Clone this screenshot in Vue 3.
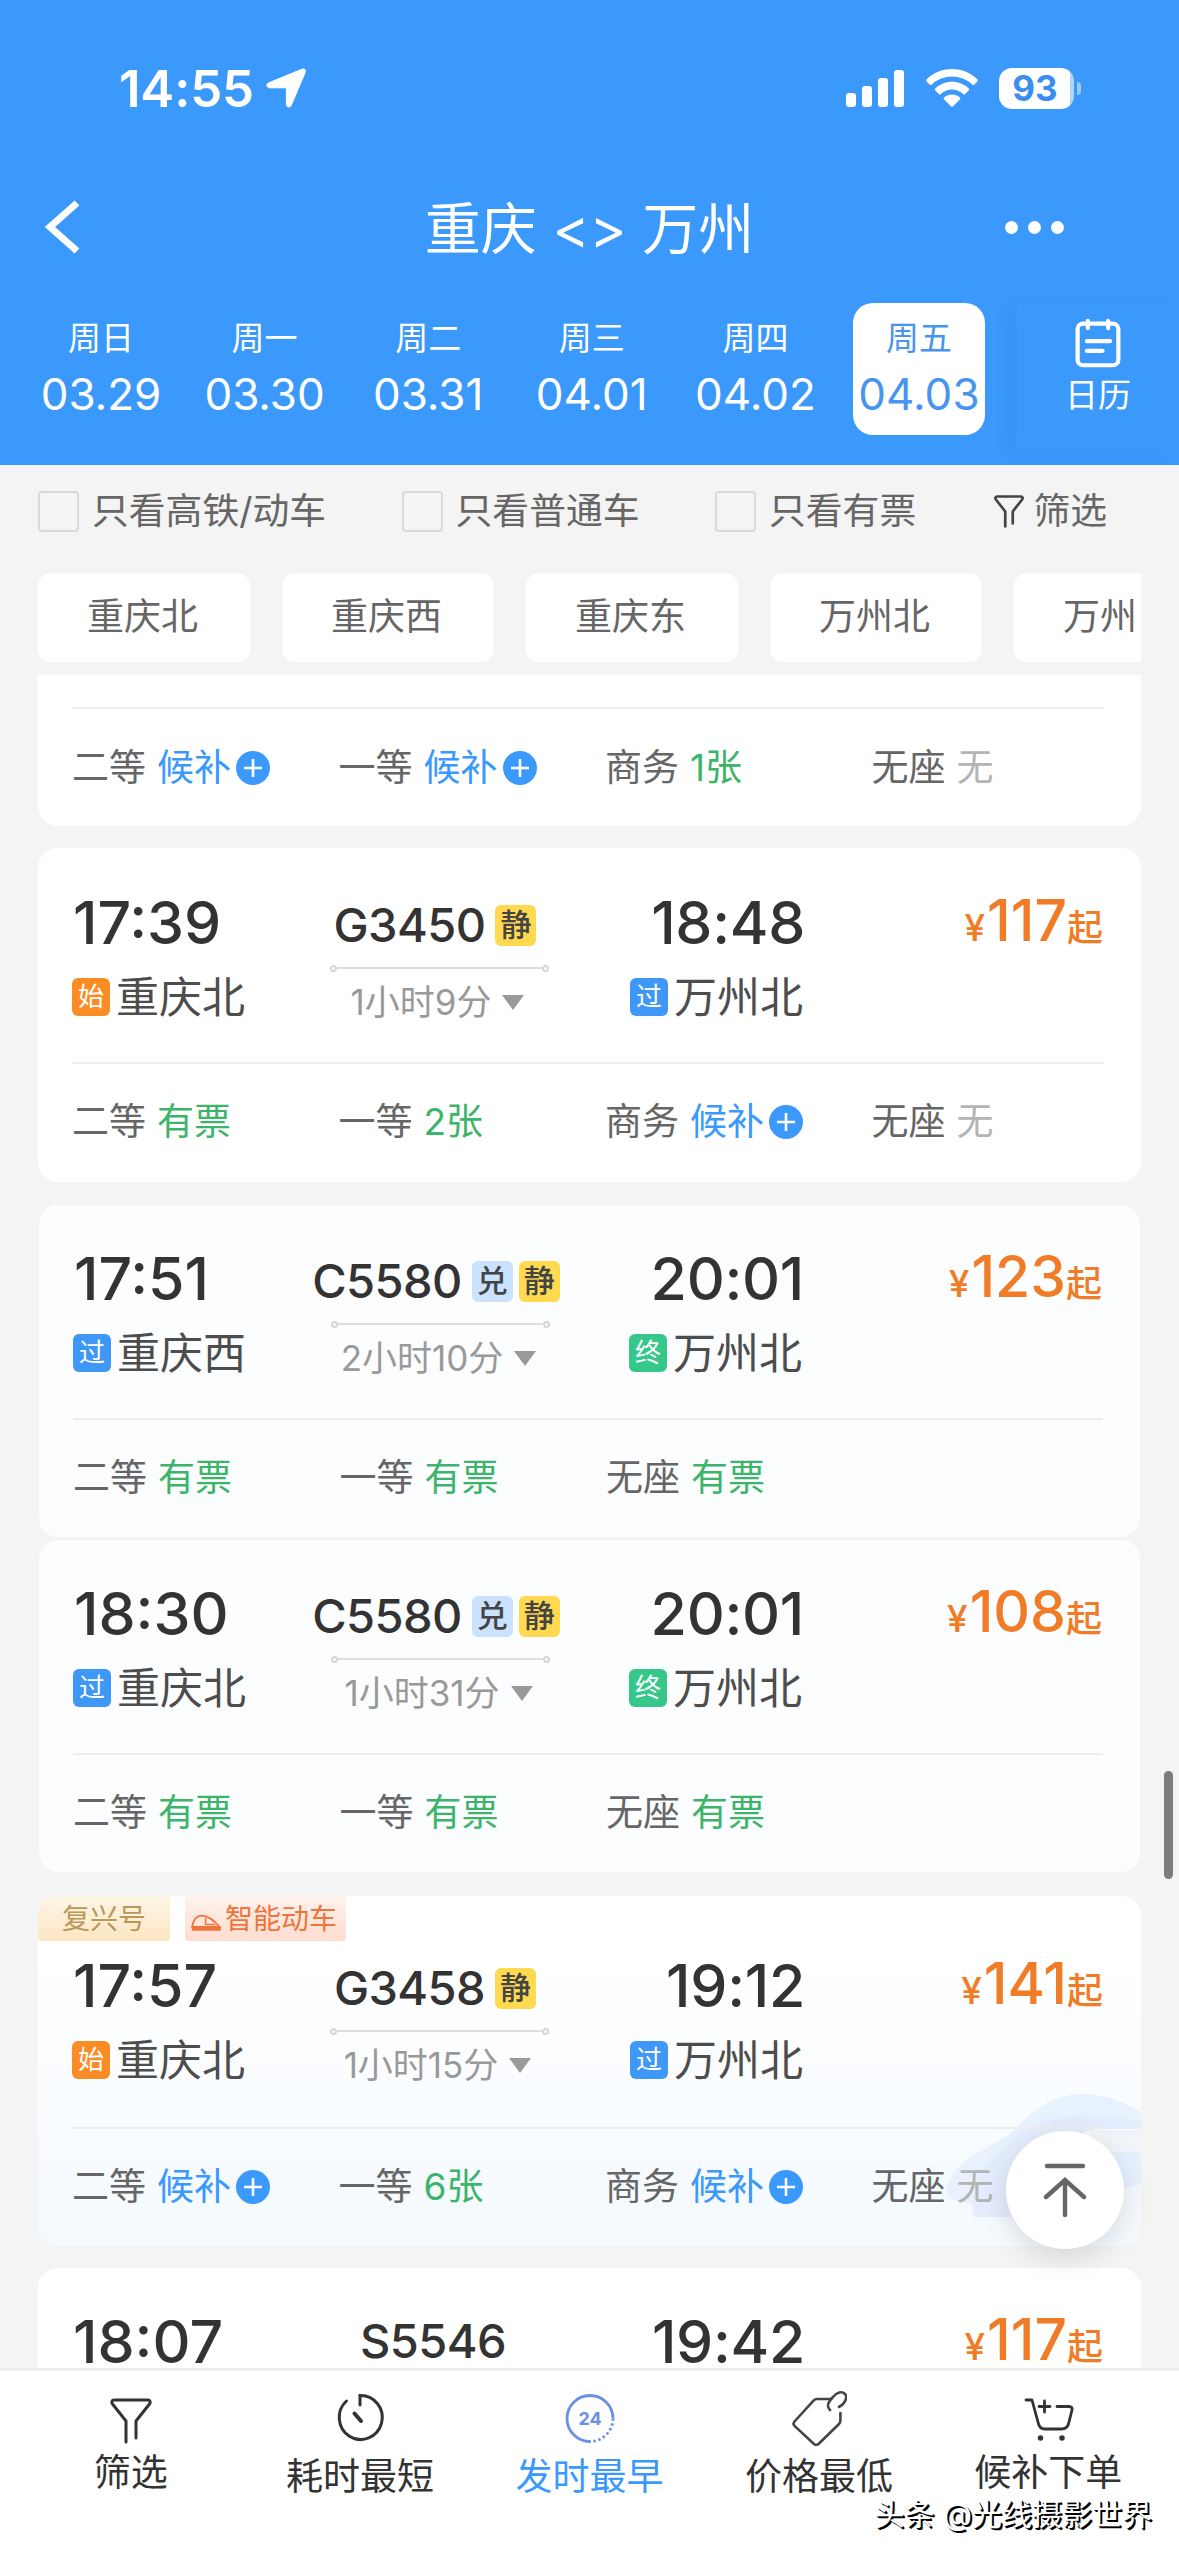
<template>
  <div class="page">
    <header class="header">
      <div class="status-bar">
        <div class="status-left">
          <span class="clock">14:55</span>
          <svg class="location" viewBox="0 0 40 40">
            <path d="M36 1.2c2.4-1 4.2.8 3.2 3.2L25.4 37c-1.2 3-5 2.5-5-.8V21c0-.8-.4-1.2-1.2-1.2H3.8c-3.4 0-4-3.8-1-5z" fill="#fff" stroke="#fff" stroke-width="1" />
          </svg>
        </div>
        <div class="status-right">
          <svg class="signal" viewBox="0 0 58 38">
            <rect x="0" y="24" width="10" height="14" rx="3" />
            <rect x="16" y="17" width="10" height="21" rx="3" />
            <rect x="32" y="9" width="10" height="29" rx="3" />
            <rect x="48" y="1" width="10" height="37" rx="3" />
          </svg>
          <svg class="wifi" viewBox="0 0 52 38">
            <path d="M26 0C36 0 45 4 51.3 10.2c.8.8.8 1.6.1 2.3l-3 3c-.7.7-1.5.7-2.2 0C40.6 10.4 33.6 7.6 26 7.6S11.4 10.4 5.8 15.5c-.7.7-1.5.7-2.2 0l-3-3c-.7-.7-.7-1.5.1-2.3C7 4 16 0 26 0z" />
            <path d="M26 12.8c6.4 0 12.2 2.5 16.5 6.5.8.8.8 1.6.1 2.3l-3.3 3.3c-.7.7-1.4.7-2.2 0-3-2.7-6.9-4.3-11.1-4.3s-8.1 1.6-11.1 4.3c-.8.7-1.5.7-2.2 0l-3.3-3.3c-.7-.7-.7-1.5.1-2.3 4.3-4 10.1-6.5 16.5-6.5z" />
            <path d="M26 25.4c3 0 5.7 1.1 7.7 2.9.9.8.9 1.5.2 2.2l-6.5 6.6c-.9.9-1.9.9-2.8 0l-6.5-6.6c-.7-.7-.7-1.4.2-2.2 2-1.8 4.7-2.9 7.7-2.9z" />
          </svg>
          <div class="battery">
            <span class="battery-body">93</span>
            <i class="battery-cap"></i>
          </div>
        </div>
      </div>

      <div class="nav-bar">
        <svg class="back" viewBox="0 0 36 54">
          <path d="M33 3 6 27l27 24" fill="none" stroke="#fff" stroke-width="7" />
        </svg>
        <h1 class="title">{{ from }} &lt;&gt; {{ to }}</h1>
        <div class="more"><i></i><i></i><i></i></div>
      </div>

      <div class="date-bar">
        <div class="dates">
          <div
            v-for="day in days"
            :key="day.date"
            :class="['date', { active: day.date === currentDate }]"
            @click="currentDate = day.date"
          >
            <span class="week">{{ day.week }}</span>
            <span class="day">{{ day.date }}</span>
          </div>
        </div>
        <div class="calendar">
          <svg class="calendar-icon" viewBox="0 0 50 54" fill="none" stroke="#fff" stroke-width="4.5" stroke-linecap="round">
            <rect x="3" y="6" width="44" height="45" rx="6" />
            <path d="M14 3v8M36 3v8M13 25h25M13 35.5h17" />
          </svg>
          <span class="week">日历</span>
        </div>
      </div>
    </header>

    <div class="filters">
      <label v-for="item in checks" :key="item" class="check">
        <i class="box"></i>{{ item }}
      </label>
      <div class="filter-more">
        <svg class="funnel-small" viewBox="0 0 40 44" fill="none" stroke="#444" stroke-width="3.6" stroke-linecap="round" stroke-linejoin="round">
          <path d="M15 42V22L2.5 6C1 4 2 2 4 2h32c2 0 3 2 1.5 4L25 22v16" />
        </svg>
        筛选
      </div>
    </div>

    <div class="stations">
      <div v-for="name in stations" :key="name" class="station-chip">{{ name }}</div>
    </div>

    <main class="list">
      <section
        v-for="(train, index) in trains"
        :key="index"
        :class="['card', train.style]"
      >
        <svg v-if="train.tags" class="swirl" viewBox="0 0 200 156">
          <path d="M8 92c8-20 30-30 62-48C92 18 116 4 140 4c24 0 44 8 60 18v17h-46c-40 8-58 44-70 88H34c-6-2 2-12-8-14-20-4-24-8-18-21z" fill="#e8f1fe" />
          <path d="M40 82c36-50 88-68 160-50v7h-46c-40 8-58 44-70 88H34c-4-16-2-30 6-45z" fill="#dfeafc" opacity="0.5" />
          <path d="M150 40h50v22h-50z" fill="#f1f4f8" />
          <path d="M140 62h60v32c-20 6-40 6-60 4z" fill="#e6f0fe" />
        </svg>
        <div v-if="train.tags" class="tags">
          <span class="tag tag-gold">复兴号</span>
          <span class="tag tag-orange">
            <svg class="train-icon" viewBox="0 0 32 18">
              <path d="M1 13C2.5 6 6 1.5 11 1.5c7 0 13 5 19 12H1z" fill="none" stroke="#f0743a" stroke-width="1.8" />
              <path d="M15 3.5v7h10" fill="none" stroke="#f0743a" stroke-width="1.6" />
              <path d="M1 12h28l2.5 5H1z" fill="#f0743a" />
            </svg>
            智能动车
          </span>
        </div>

        <div v-if="train.no" class="trip">
          <div class="depart">
            <div class="time">{{ train.start }}</div>
            <div v-if="train.from" class="place">
              <span :class="['mark', markClass[train.fromMark]]">{{ train.fromMark }}</span>{{ train.from }}
            </div>
          </div>
          <div class="middle">
            <div :class="['number', { plain: !train.badges.length }]">
              {{ train.no }}
              <span v-for="b in train.badges" :key="b" :class="['badge', b === '兑' ? 'badge-blue' : 'badge-yellow']">{{ b }}</span>
            </div>
            <template v-if="train.duration">
              <div class="track"><i></i><i></i></div>
              <div class="duration">{{ train.duration }}<i class="caret"></i></div>
            </template>
          </div>
          <div class="arrive">
            <div class="time">{{ train.end }}</div>
            <div v-if="train.to" class="place">
              <span :class="['mark', markClass[train.toMark]]">{{ train.toMark }}</span>{{ train.to }}
            </div>
          </div>
          <div class="price"><small class="yen">¥</small>{{ train.price }}<small>起</small></div>
        </div>

        <div v-if="train.seats" class="seats">
          <div v-for="seat in train.seats" :key="seat[0]" class="seat">
            <span class="seat-name">{{ seat[0] }}</span>
            <span :class="seatClass(seat[1])">{{ seat[1] }}</span>
            <svg v-if="seat[1] === '候补'" class="plus" viewBox="0 0 34 34">
              <circle cx="17" cy="17" r="17" fill="#3b99fc" />
              <path d="M8 17h18M17 8v18" stroke="#fff" stroke-width="2.6" />
            </svg>
          </div>
        </div>
      </section>
    </main>

    <nav class="tab-bar">
      <div class="tab tab-up">
        <svg class="tab-icon" viewBox="0 0 56 56" fill="none" stroke="#333" stroke-width="3" stroke-linecap="round" stroke-linejoin="round">
          <path d="M23 52V31L9.5 14C8 12 9 10 11 10h34c2 0 3 2 1.5 4L33 31v17" />
        </svg>
        <span>筛选</span>
      </div>
      <div class="tab">
        <svg class="tab-icon" viewBox="0 0 56 56" fill="none" stroke="#333" stroke-width="3" stroke-linecap="round">
          <path d="M28 15V5.5A21.5 22 0 1 1 14.5 11" />
          <path d="M22.5 23.5 29 31" stroke-width="4" />
        </svg>
        <span>耗时最短</span>
      </div>
      <div class="tab active">
        <svg class="tab-icon" viewBox="0 0 56 56" fill="none" stroke="#6b8fe6" stroke-width="2.8">
          <path d="M28 51.5a23 23 0 1 1 23-23" />
          <path d="M51 28.5a23 23 0 0 1-23 23" stroke-dasharray="2.4 2.6" />
          <text x="28" y="35" text-anchor="middle" class="day-text">24</text>
        </svg>
        <span>发时最早</span>
      </div>
      <div class="tab">
        <svg class="tab-icon" viewBox="0 0 56 56" fill="none" stroke="#444" stroke-width="2.6" stroke-linecap="round" stroke-linejoin="round">
          <path d="M40 9H26c-1.5 0-2.5.5-3.5 1.6L3.5 31.5c-1.3 1.5-1.3 2.9 0 4.4L23 54c1.5 1.3 3 1.3 4.5 0L48 34c1-1 1.4-2 1.4-3.2V23" />
          <path d="M39 20c-4-4-2-8 3-13 4-5 9-6 12-3s0 10-6 13" />
        </svg>
        <span>价格最低</span>
      </div>
      <div class="tab tab-up">
        <svg class="tab-icon" viewBox="0 0 56 56" fill="none" stroke="#333" stroke-width="2.8" stroke-linecap="round" stroke-linejoin="round">
          <path d="M6 10h6l6.5 24c1 3 2.5 5 6 5h17c4 0 6-2 7-5L52 20c.6-2-.5-3.500-3-3.500H37" />
          <path d="M19 16.500h11M24.500 11v11" />
          <circle cx="20.5" cy="48" r="2" fill="#333" stroke-width="1.5" />
          <circle cx="42" cy="48" r="2" fill="#333" stroke-width="1.5" />
        </svg>
        <span>候补下单</span>
      </div>
    </nav>

    <div class="to-top">
      <svg viewBox="0 0 44 54" fill="none" stroke="#666" stroke-width="4.4" stroke-linecap="round">
        <path d="M4 3h36M22 17v35M3 34l19-17 19 17" />
      </svg>
    </div>
    <div class="scrollbar"></div>
    <div class="watermark">头条 @光线摄影世界</div>
  </div>
</template>

<script setup>
import { ref } from 'vue';

const from = '重庆';
const to = '万州';
const currentDate = ref('04.03');

const days = [
  { week: '周日', date: '03.29' },
  { week: '周一', date: '03.30' },
  { week: '周二', date: '03.31' },
  { week: '周三', date: '04.01' },
  { week: '周四', date: '04.02' },
  { week: '周五', date: '04.03' }
];

const checks = ['只看高铁/动车', '只看普通车', '只看有票'];
const stations = ['重庆北', '重庆西', '重庆东', '万州北', '万州'];

const markClass = { 始: 'mark-start', 过: 'mark-pass', 终: 'mark-end' };

const trains = [
  {
    style: 'card-cut',
    seats: [['二等', '候补'], ['一等', '候补'], ['商务', '1张'], ['无座', '无']]
  },
  {
    no: 'G3450', badges: ['静'], start: '17:39', end: '18:48',
    fromMark: '始', from: '重庆北', toMark: '过', to: '万州北',
    duration: '1小时9分', price: 117,
    seats: [['二等', '有票'], ['一等', '2张'], ['商务', '候补'], ['无座', '无']]
  },
  {
    style: 'card-transfer card-joined',
    no: 'C5580', badges: ['兑', '静'], start: '17:51', end: '20:01',
    fromMark: '过', from: '重庆西', toMark: '终', to: '万州北',
    duration: '2小时10分', price: 123,
    seats: [['二等', '有票'], ['一等', '有票'], ['无座', '有票']]
  },
  {
    style: 'card-transfer',
    no: 'C5580', badges: ['兑', '静'], start: '18:30', end: '20:01',
    fromMark: '过', from: '重庆北', toMark: '终', to: '万州北',
    duration: '1小时31分', price: 108,
    seats: [['二等', '有票'], ['一等', '有票'], ['无座', '有票']]
  },
  {
    style: 'card-smart', tags: true,
    no: 'G3458', badges: ['静'], start: '17:57', end: '19:12',
    fromMark: '始', from: '重庆北', toMark: '过', to: '万州北',
    duration: '1小时15分', price: 141,
    seats: [['二等', '候补'], ['一等', '6张'], ['商务', '候补'], ['无座', '无']]
  },
  {
    style: 'card-last',
    no: 'S5546', badges: [], start: '18:07', end: '19:42', price: 117
  }
];

const seatClass = (text) => {
  if (text === '候补') return 'wait';
  return text === '无' ? 'none' : 'have';
};
</script>

<style>
body {
  background: #f4f4f4;
}
</style>

<style scoped>
.page {
  position: relative;
  display: flex;
  flex-direction: column;
  width: 1179px;
  height: 2556px;
  overflow: hidden;
  background: #f4f4f4;
  font-family: Inter, "Noto Sans CJK SC", sans-serif;
  color: #333;
  white-space: nowrap;
}

.page * {
  box-sizing: border-box;
}

.header {
  height: 465px;
  flex: none;
  background: #3b99fc;
  color: #fff;
}

.status-bar {
  display: flex;
  justify-content: space-between;
  align-items: center;
  height: 176px;
  padding: 0 98px 0 119px;
}

.status-left,
.status-right {
  display: flex;
  align-items: center;
}

.clock {
  width: 147px;
  font-size: 51px;
  font-weight: 600;
  letter-spacing: -0.2px;
}

.location {
  width: 40px;
  height: 40px;
}

.signal {
  width: 58px;
  height: 38px;
  margin-right: 22px;
  fill: #fff;
}

.wifi {
  width: 52px;
  height: 38px;
  margin-right: 21px;
  fill: #fff;
}

.battery {
  display: flex;
  align-items: center;
  gap: 3px;
}

.battery-body {
  width: 75px;
  height: 41px;
  padding-right: 3px;
  border-radius: 13px;
  background: linear-gradient(90deg, #fff 71px, #b0d6fe 71px);
  color: #3b8ef0;
  font-size: 35px;
  font-weight: 700;
  line-height: 41px;
  text-align: center;
}

.battery-cap {
  width: 4px;
  height: 13px;
  border-radius: 0 4px 4px 0;
  background: #9bcafd;
}

.nav-bar {
  display: flex;
  align-items: center;
  height: 102px;
  padding: 0 115px 0 43px;
}

.back {
  width: 38px;
  height: 54px;
}

.title {
  flex: 1;
  margin: 0;
  padding: 3px 0 0 93px;
  font-size: 56px;
  font-weight: 400;
  line-height: 102px;
  text-align: center;
}

.more {
  display: flex;
  gap: 10px;
}

.more i {
  width: 13px;
  height: 13px;
  border-radius: 50%;
  background: #fff;
}

.date-bar {
  display: flex;
  justify-content: space-between;
  padding-top: 25px;
}

.dates {
  display: flex;
  gap: 31.6px;
  padding-left: 35px;
}

.date {
  display: flex;
  flex-direction: column;
  align-items: center;
  width: 132px;
  height: 132px;
  padding-top: 13px;
  border-radius: 20px;
}

.date.active {
  background: #fff;
  color: #4795ee;
}

.week {
  font-size: 33px;
  line-height: 44px;
}

.day {
  margin-top: 7px;
  font-size: 44px;
  line-height: 54px;
}

.calendar {
  display: flex;
  flex-direction: column;
  align-items: center;
  width: 162px;
  height: 150px;
  padding-top: 15px;
  box-shadow: -10px 0 16px -4px rgba(10, 90, 190, 0.09);
}

.calendar-icon {
  width: 50px;
  height: 50px;
  margin-bottom: 5px;
}

.filters {
  display: flex;
  align-items: center;
  height: 108px;
  flex: none;
  padding: 0 72px 16px 38px;
  color: #666;
  font-size: 36.8px;
  line-height: 44px;
}

.check {
  display: flex;
  align-items: center;
  margin-right: 75.5px;
}

.box {
  width: 41px;
  height: 41px;
  margin-right: 13px;
  border: 2px solid #d9d9d9;
  border-radius: 4px;
}

.filter-more {
  display: flex;
  align-items: center;
  gap: 9px;
  margin-left: auto;
}

.funnel-small {
  width: 30px;
  height: 33px;
}

.stations {
  display: flex;
  gap: 32px;
  flex: none;
  margin: 0 38px 13px;
  overflow: hidden;
}

.station-chip {
  width: 212px;
  height: 89px;
  flex: none;
  padding-left: 49px;
  border-radius: 13px;
  background: #fff;
  color: #666;
  font-size: 37px;
  line-height: 88px;
}

.list {
  flex: 1;
  min-height: 0;
  overflow: hidden;
  padding: 0 38px;
}

.card {
  position: relative;
  height: 334px;
  margin-bottom: 22px;
  padding: 45px 38px 0 34px;
  border-radius: 20px;
  background: #fff;
  overflow: hidden;
}

.card-cut {
  height: 151px;
  padding-top: 32px;
  border-radius: 0 0 20px 20px;
}

.card-transfer {
  margin-bottom: 23px;
  border: 1px solid #f3f4f7;
  background: #fcfdff;
  padding: 44px 38px 0 34px;
}

.card-joined {
  margin-bottom: 1px;
}

.card-smart {
  height: 350px;
  padding-top: 0;
  background: linear-gradient(180deg, #fff 15%, #f5faff 90%);
}

.card-last {
  height: 101px;
  padding-top: 44px;
  border-radius: 20px 20px 0 0;
}

.swirl {
  position: absolute;
  right: 0;
  bottom: 0;
  width: 200px;
  height: 156px;
}

.tags {
  display: flex;
  gap: 15px;
  height: 60px;
  margin-left: -34px;
}

.tag {
  display: flex;
  align-items: center;
  height: 45px;
  padding-bottom: 3px;
  border-radius: 0 0 4px 4px;
  font-size: 28px;
}

.tag-gold {
  width: 132px;
  justify-content: center;
  background: linear-gradient(180deg, #fdf5e6, #fce6c3);
  color: #b99858;
}

.tag-orange {
  gap: 3px;
  padding-right: 9px;
  padding-left: 6px;
  background: linear-gradient(180deg, #fff3ee, #fddccf);
  color: #f0743a;
}

.train-icon {
  width: 31px;
  height: 18px;
  margin-top: 12px;
}

.trip {
  position: relative;
  display: flex;
  height: 169px;
}

.card-smart .trip {
  height: 171px;
}

.card-last .trip {
  height: 57px;
}

.depart {
  width: 258px;
}

.middle {
  display: flex;
  flex-direction: column;
  align-items: center;
  width: 219px;
}

.arrive {
  display: flex;
  flex-direction: column;
  align-items: flex-end;
  width: 254px;
}

.card-transfer .arrive {
  width: 252px;
}

.time {
  padding-left: 1px;
  font-size: 59px;
  font-weight: 500;
  line-height: 60px;
}

.arrive .time {
  letter-spacing: -0.3px;
  margin-right: -2px;
}

.place {
  display: flex;
  align-items: center;
  margin-top: 19px;
  color: #4d4d4d;
  font-size: 43px;
  line-height: 50px;
}

.mark {
  width: 38px;
  height: 38px;
  margin-right: 6px;
  border-radius: 6px;
  color: #fff;
  font-size: 26px;
  line-height: 37px;
  text-align: center;
}

.mark-start {
  background: #fa8c25;
}

.mark-pass {
  background: #3f97f8;
}

.mark-end {
  background: #36c78b;
}

.number {
  display: flex;
  align-items: center;
  gap: 6px;
  margin-top: 7px;
  margin-right: 9px;
  font-size: 47px;
  font-weight: 500;
  line-height: 50px;
  letter-spacing: -0.6px;
}

.number.plain {
  margin-top: 4px;
  margin-right: 13px;
}

.badge {
  width: 41px;
  height: 41px;
  border-radius: 6px;
  color: #444;
  font-size: 31px;
  font-weight: 500;
  line-height: 39px;
  text-align: center;
  letter-spacing: 0;
}

.badge:first-of-type {
  margin-left: 4px;
}

.badge-yellow {
  background: #ffd94f;
}

.badge-blue {
  background: #cbe2ff;
}

.track {
  display: flex;
  align-items: center;
  width: 219px;
  height: 8px;
  margin-top: 14px;
}

.track::before {
  content: "";
  order: 1;
  flex: 1;
  height: 2px;
  background: #dedede;
}

.track i {
  width: 7px;
  height: 7px;
  border: 2px solid #d6d6d6;
  border-radius: 50%;
}

.track i:last-child {
  order: 2;
}

.duration {
  display: flex;
  align-items: center;
  margin-top: 10px;
  margin-right: 4px;
  color: #999;
  font-size: 35px;
  line-height: 40px;
}

.caret {
  margin-left: 11px;
  border: 11px solid transparent;
  border-top: 15px solid #999;
  border-bottom: 0;
}

.price {
  flex: 1;
  color: #f07c27;
  font-size: 57px;
  font-weight: 500;
  line-height: 56px;
  text-align: right;
}

.price small {
  font-size: 36px;
}

.price .yen {
  margin-right: 2px;
  font-size: 37px;
}

.seats {
  position: relative;
  display: flex;
  margin-right: -1px;
  padding-top: 36px;
  border-top: 2px solid #eee;
  font-size: 37px;
  line-height: 44px;
}

.card-cut .seats {
  padding-top: 37px;
}

.seat {
  display: flex;
  align-items: center;
  width: 266.5px;
  flex: none;
}

.seat-name {
  margin-right: 11px;
  color: #666;
}

.wait {
  color: #3b99fc;
}

.have {
  color: #3cb56a;
}

.none {
  color: #b4b4b4;
}

.plus {
  width: 34px;
  height: 34px;
  margin-left: 5px;
}

.tab-bar {
  display: flex;
  flex: none;
  height: 188px;
  padding: 19px 16px 0 16px;
  border-top: 3px solid #eee;
  background: #fff;
}

.tab {
  display: flex;
  flex: 1;
  flex-direction: column;
  align-items: center;
  font-size: 37px;
  line-height: 44px;
}

.tab-icon {
  width: 56px;
  height: 56px;
  margin-bottom: 9px;
}

.tab-up .tab-icon {
  margin-bottom: 5px;
}

.tab.active {
  color: #3b99fc;
}

.day-text {
  fill: #6b8fe6;
  stroke: none;
  font-size: 18px;
  font-weight: 700;
}

.to-top {
  position: absolute;
  top: 2131px;
  left: 1006px;
  display: flex;
  align-items: center;
  justify-content: center;
  width: 118px;
  height: 118px;
  border-radius: 50%;
  background: #fff;
  box-shadow: 0 8px 30px rgba(0, 0, 0, 0.13);
}

.to-top svg {
  width: 44px;
  height: 54px;
}

.scrollbar {
  position: absolute;
  top: 1771px;
  right: 6px;
  width: 9px;
  height: 108px;
  border-radius: 5px;
  background: #7c7c7c;
}

.watermark {
  position: absolute;
  right: 27px;
  bottom: 22px;
  color: #fff;
  font-size: 30px;
  line-height: 40px;
  text-shadow: 2px 2px 0 #000, 1px 1px 0 #000;
}
</style>
